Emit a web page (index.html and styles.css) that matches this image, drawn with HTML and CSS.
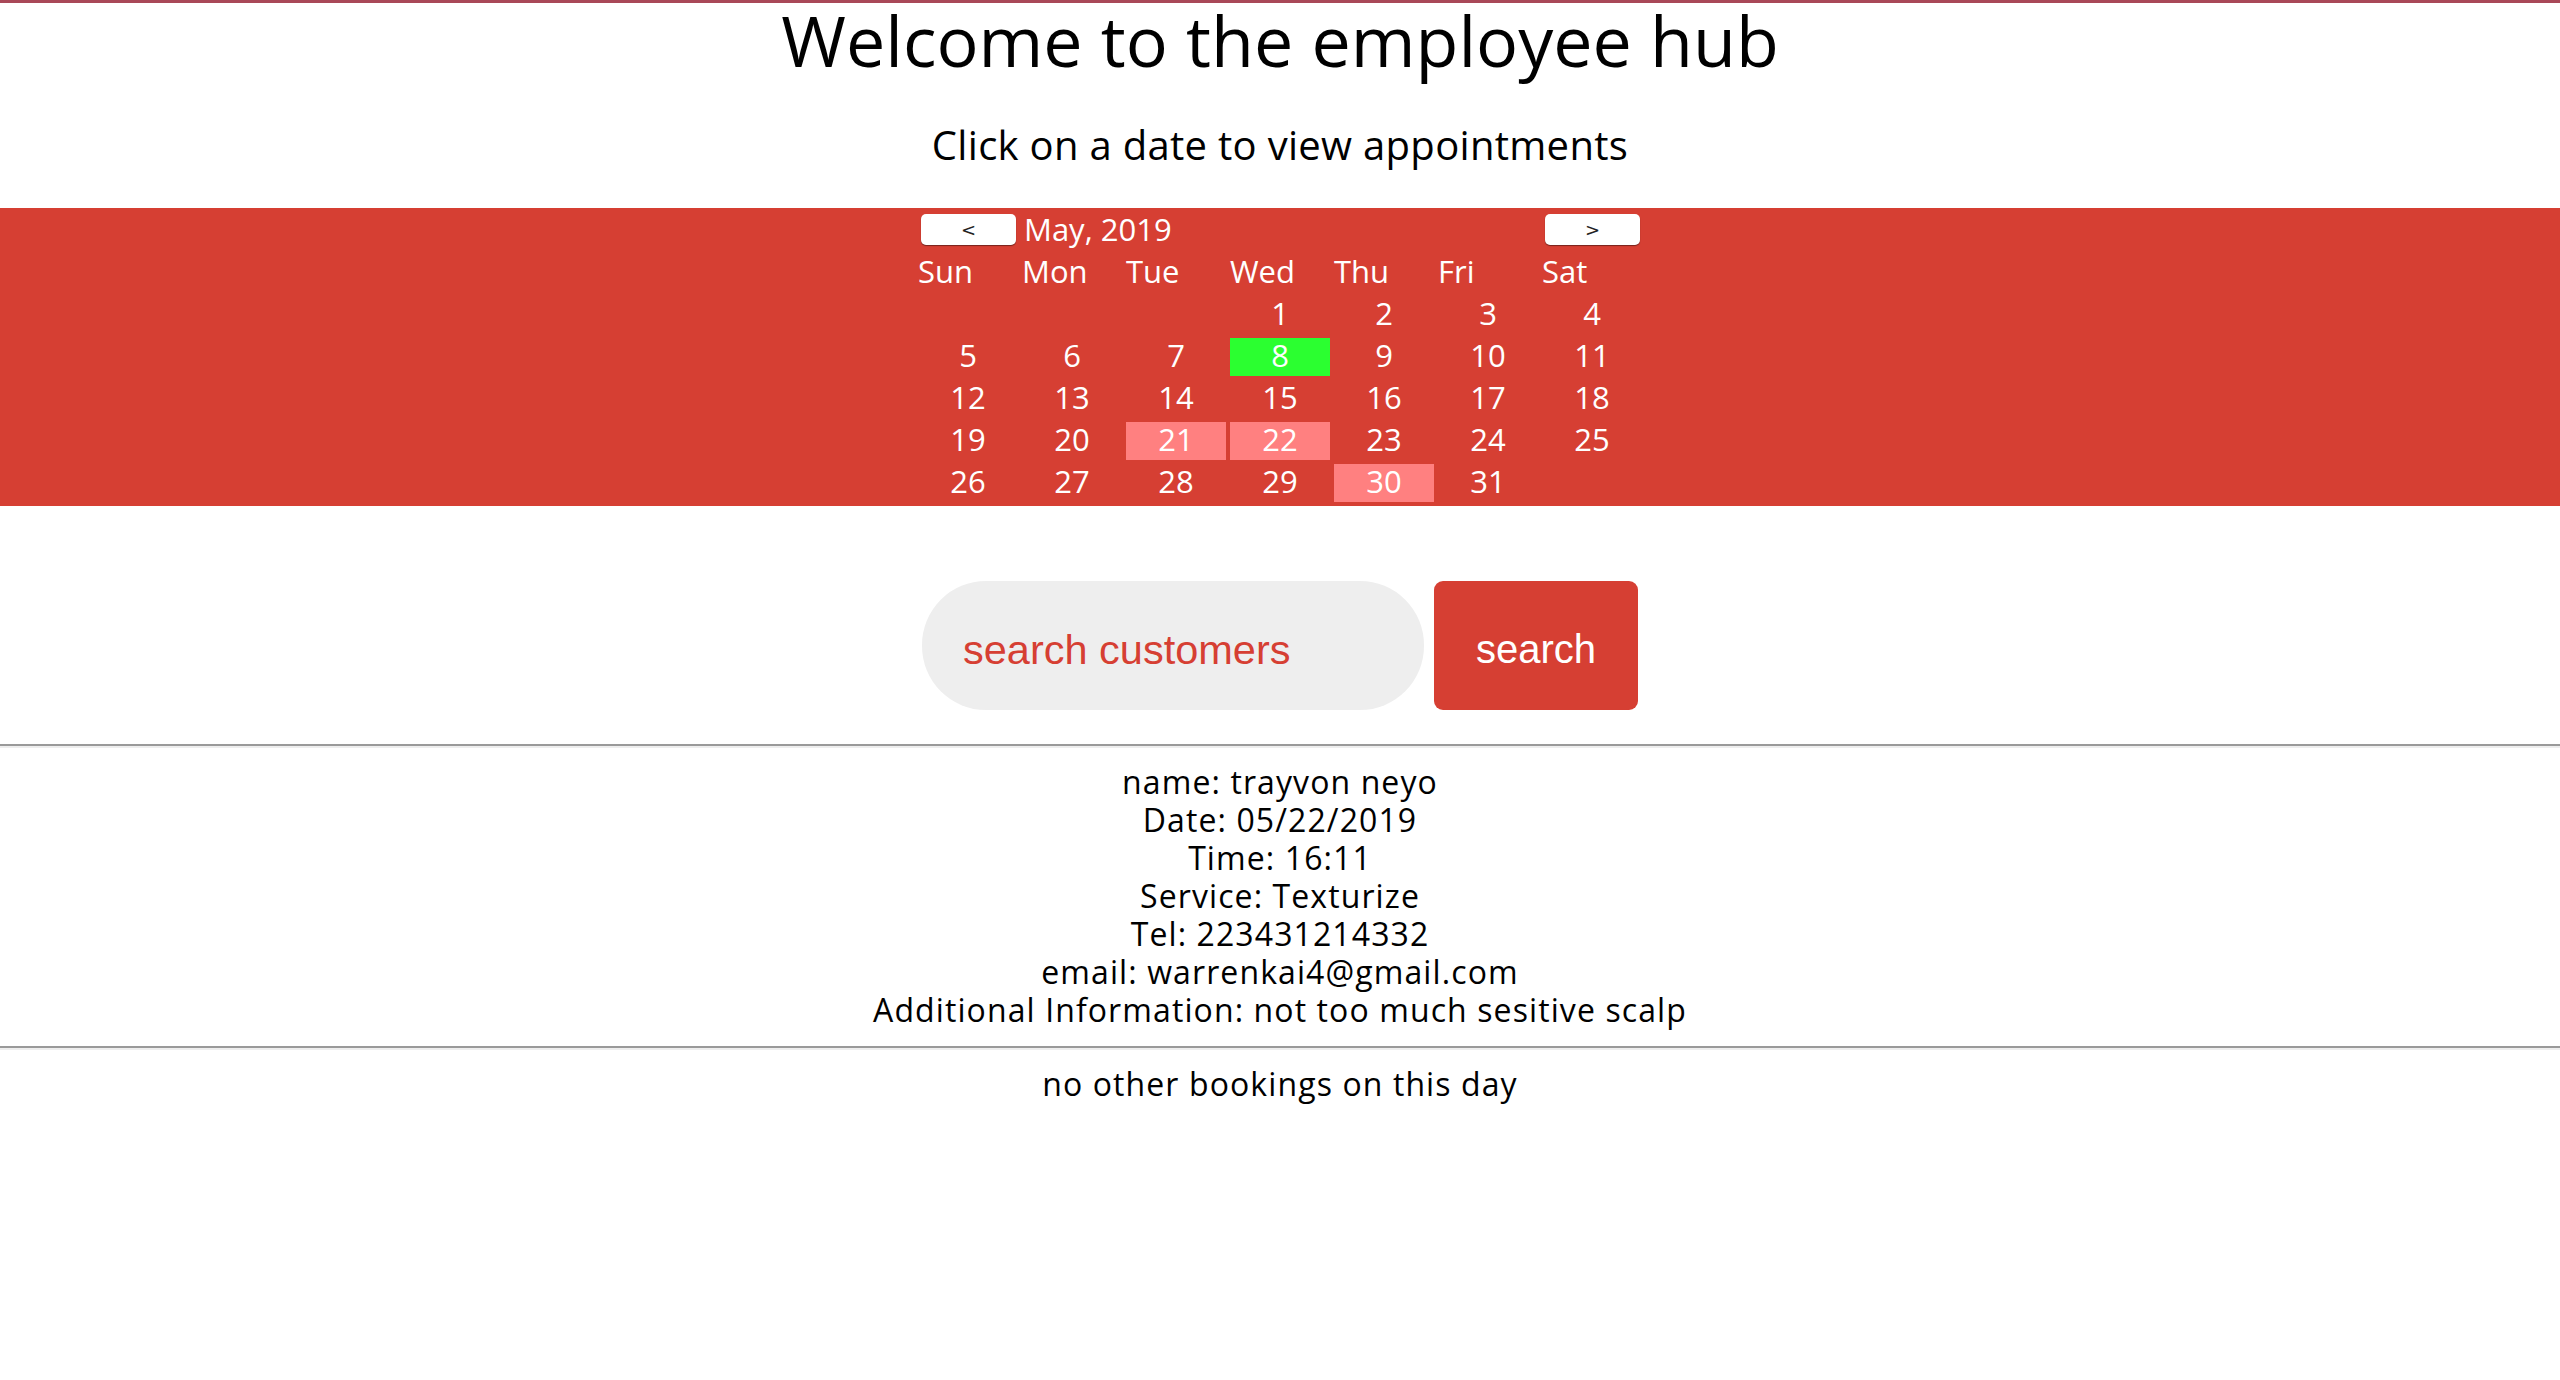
FILE: index.html
```html
<!DOCTYPE html>
<html lang="en">
<head>
<meta charset="utf-8">
<title>Employee hub</title>
<link rel="stylesheet" href="styles.css">
</head>
<body>
<header class="intro">
  <h1 class="title">Welcome to the employee hub</h1>
  <p class="subtitle">Click on a date to view appointments</p>
</header>

<section class="cal-band">
  <table class="calendar">
    <tr class="cal-nav">
      <td><button class="nav-btn" type="button">&lt;</button></td>
      <td class="month" colspan="5">May, 2019</td>
      <td><button class="nav-btn" type="button">&gt;</button></td>
    </tr>
    <tr class="cal-head">
      <th>Sun</th><th>Mon</th><th>Tue</th><th>Wed</th><th>Thu</th><th>Fri</th><th>Sat</th>
    </tr>
    <tr>
      <td></td><td></td><td></td><td>1</td><td>2</td><td>3</td><td>4</td>
    </tr>
    <tr>
      <td>5</td><td>6</td><td>7</td><td class="today">8</td><td>9</td><td>10</td><td>11</td>
    </tr>
    <tr>
      <td>12</td><td>13</td><td>14</td><td>15</td><td>16</td><td>17</td><td>18</td>
    </tr>
    <tr>
      <td>19</td><td>20</td><td class="booked">21</td><td class="booked">22</td><td>23</td><td>24</td><td>25</td>
    </tr>
    <tr>
      <td>26</td><td>27</td><td>28</td><td>29</td><td class="booked">30</td><td>31</td><td></td>
    </tr>
  </table>
</section>

<form class="search">
  <input class="search-input" type="text" placeholder="search customers">
  <button class="search-btn" type="button">search</button>
</form>

<hr class="rule">
<div class="booking">
  <div>name: trayvon neyo</div>
  <div>Date: 05/22/2019</div>
  <div>Time: 16:11</div>
  <div>Service: Texturize</div>
  <div>Tel: 223431214332</div>
  <div>email: warrenkai4@gmail.com</div>
  <div>Additional Information: not too much sesitive scalp</div>
</div>
<hr class="rule">
<div class="booking">
  <div>no other bookings on this day</div>
</div>
</body>
</html>
```

FILE: styles.css
```css
html, body {
  margin: 0;
  padding: 0;
  background: #ffffff;
}

body {
  border-top: 3px solid #a94858;
  font-family: "Open Sans", "DejaVu Sans", sans-serif;
  color: #000000;
  text-align: center;
}

.title {
  margin: 0;
  font-size: 70px;
  line-height: 74px;
  font-weight: 400;
}

.subtitle {
  margin: 44px 0 39px;
  font-size: 40px;
  line-height: 48px;
  letter-spacing: 0.3px;
}

.cal-band {
  background: #d63f33;
}

.calendar {
  margin: 0 auto;
  border-collapse: separate;
  border-spacing: 4px;
  color: #ffffff;
  font-size: 31px;
}

.calendar td,
.calendar th {
  box-sizing: border-box;
  width: 100px;
  height: 38px;
  padding: 0;
  line-height: 35px;
  text-align: center;
  vertical-align: top;
  font-weight: 400;
}

.calendar th {
  text-align: left;
}

.calendar td.month {
  text-align: left;
  padding-left: 2px;
}

.nav-btn {
  display: block;
  width: 95px;
  height: 31px;
  margin: 2px 0 0 3px;
  border: none;
  border-radius: 5px;
  background: #ffffff;
  box-shadow: 0 1px 1px rgba(0, 0, 0, 0.45);
  color: #222222;
  font-family: "DejaVu Sans", "Liberation Sans", sans-serif;
  font-size: 18px;
  line-height: 31px;
  padding: 0;
}

.calendar td.today {
  background: #2bff30;
}

.calendar td.booked {
  background: #ff8080;
}

.search {
  display: flex;
  justify-content: center;
  gap: 10px;
  margin: 75px 0 34px;
}

.search-input {
  box-sizing: border-box;
  width: 502px;
  height: 129px;
  border: none;
  border-radius: 64px;
  background: #eeeeee;
  padding: 8px 20px 0 41px;
  font-family: "Liberation Sans", Arial, sans-serif;
  font-size: 41.5px;
  color: #d63f33;
  outline: none;
}

.search-input::placeholder {
  color: #d63f33;
  opacity: 1;
}

.search-btn {
  box-sizing: border-box;
  width: 204px;
  height: 129px;
  border: none;
  border-radius: 9px;
  background: #d63f33;
  color: #ffffff;
  font-family: "Liberation Sans", Arial, sans-serif;
  font-size: 40px;
  padding: 8px 0 0;
}

.rule {
  margin: 0;
  height: 0;
  border: none;
  border-top: 2px solid #9a9a9a;
  border-bottom: 2px solid #eeeeee;
}

.booking {
  padding: 15px 0 17px;
  font-size: 32px;
  line-height: 38px;
  letter-spacing: 1.1px;
}
```
